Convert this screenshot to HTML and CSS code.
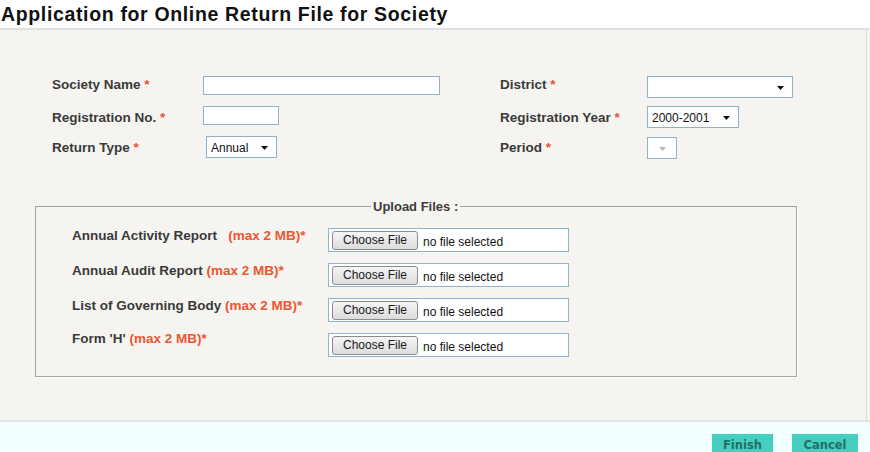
FILE: index.html
```html
<!DOCTYPE html>
<html lang="en">
<head>
<meta charset="utf-8">
<title>Application for Online Return File for Society</title>
<link rel="stylesheet" href="styles.css">
</head>
<body>
<div class="title-bar">
  <h1 class="title">Application for Online Return File for Society</h1>
</div>
<div class="panel">
  <div class="panel-inner">
    <div class="form-grid">
      <label class="lbl lbl-top">Society Name <span class="req">*</span></label>
      <div class="cell"><input class="textbox w-name" type="text"></div>
      <label class="lbl lbl-top">District <span class="req">*</span></label>
      <div class="cell">
        <div class="select w-district">
          <span class="sel-text"></span>
          <svg class="arrow" width="7" height="4" viewBox="0 0 7 4"><path d="M0 0H7L3.5 4Z" fill="#111"/></svg>
        </div>
      </div>

      <label class="lbl">Registration No. <span class="req">*</span></label>
      <div class="cell"><input class="textbox w-reg" type="text"></div>
      <label class="lbl">Registration Year <span class="req">*</span></label>
      <div class="cell">
        <div class="select w-year">
          <span class="sel-text">2000-2001</span>
          <svg class="arrow" width="7" height="4" viewBox="0 0 7 4"><path d="M0 0H7L3.5 4Z" fill="#111"/></svg>
        </div>
      </div>

      <label class="lbl">Return Type <span class="req">*</span></label>
      <div class="cell">
        <div class="select w-type">
          <span class="sel-text">Annual</span>
          <svg class="arrow" width="7" height="4" viewBox="0 0 7 4"><path d="M0 0H7L3.5 4Z" fill="#111"/></svg>
        </div>
      </div>
      <label class="lbl">Period <span class="req">*</span></label>
      <div class="cell">
        <div class="select w-period disabled">
          <svg class="arrow" width="7" height="4" viewBox="0 0 7 4"><path d="M0 0H7L3.5 4Z" fill="#b4b4b4"/></svg>
        </div>
      </div>
    </div>

    <fieldset class="upload">
      <legend class="upload-legend">Upload Files :</legend>
      <div class="up-row">
        <span class="up-label">Annual Activity Report &nbsp; <span class="max">(max 2 MB)*</span></span>
        <div class="filebox"><span class="choose">Choose File</span><span class="nofile">no file selected</span></div>
      </div>
      <div class="up-row">
        <span class="up-label">Annual Audit Report <span class="max">(max 2 MB)*</span></span>
        <div class="filebox"><span class="choose">Choose File</span><span class="nofile">no file selected</span></div>
      </div>
      <div class="up-row">
        <span class="up-label">List of Governing Body <span class="max">(max 2 MB)*</span></span>
        <div class="filebox"><span class="choose">Choose File</span><span class="nofile">no file selected</span></div>
      </div>
      <div class="up-row">
        <span class="up-label up-label-high">Form 'H' <span class="max">(max 2 MB)*</span></span>
        <div class="filebox"><span class="choose">Choose File</span><span class="nofile">no file selected</span></div>
      </div>
    </fieldset>
  </div>
</div>
<div class="footer">
  <button class="btn btn-finish" type="button">Finish</button>
  <button class="btn btn-cancel" type="button">Cancel</button>
</div>
</body>
</html>
```

FILE: styles.css
```css
html, body {
  margin: 0;
  padding: 0;
}
body {
  width: 870px;
  height: 452px;
  overflow: hidden;
  background: #ffffff;
  font-family: "Liberation Sans", Arial, sans-serif;
  color: #3c3c3c;
}

.title-bar {
  height: 28px;
  box-sizing: border-box;
  padding: 2.5px 0 0 1px;
}
.title {
  margin: 0;
  font-size: 19.5px;
  line-height: 22px;
  letter-spacing: 0.65px;
  font-weight: bold;
  color: #111111;
  white-space: nowrap;
}

.panel {
  border-top: 2px solid #e2e1dd;
  background: #f5f4f0;
}
.panel-inner {
  width: 866px;
  height: 390px;
  border-right: 1px solid #dddcd8;
  box-sizing: content-box;
}

.form-grid {
  display: grid;
  grid-template-columns: 151px 297px 147px 1fr;
  grid-template-rows: 30px 30px 23px;
  padding: 46px 0 0 52px;
  align-items: start;
}

.lbl {
  font-size: 13.5px;
  line-height: 15px;
  font-weight: bold;
  color: #3a3a3a;
  padding-top: 4px;
  white-space: nowrap;
}
.lbl-top {
  padding-top: 1px;
}
.req {
  color: #e6553a;
}

.cell {
  display: flex;
}

.textbox {
  box-sizing: border-box;
  height: 19px;
  margin: 0;
  padding: 0 3px;
  border: 1px solid #8fb2c4;
  background: #ffffff;
  outline: none;
}
.w-name { width: 237px; }
.w-reg { width: 76px; }

.select {
  box-sizing: border-box;
  height: 22px;
  border: 1px solid #8fb2c4;
  background: #ffffff;
  display: flex;
  align-items: center;
  justify-content: space-between;
  padding: 1px 8px 0 4px;
  font-size: 12px;
  color: #111111;
}
.sel-text {
  white-space: nowrap;
}
.arrow {
  flex: none;
}
.w-district { width: 146px; }
.w-year { width: 92px; }
.w-type { width: 71px; margin-left: 3px; }
.w-period {
  width: 30px;
  margin-top: 1px;
  justify-content: center;
  padding: 1px 0 0;
}

.upload {
  box-sizing: border-box;
  width: 762px;
  margin: 39.5px 0 0 35px;
  padding: 14.5px 0 8px 36px;
  border: 1px solid #a3a3a3;
  box-shadow: 1px 1px 0 #ffffff;
  min-width: 0;
}
.upload-legend {
  margin-left: 299px;
  padding: 0 2px;
  font-size: 13px;
  line-height: 15px;
  font-weight: bold;
  color: #3c3c3c;
}

.up-row {
  display: flex;
  align-items: flex-start;
  height: 35px;
}
.up-label {
  width: 256px;
  flex: none;
  font-size: 13.5px;
  line-height: 15px;
  font-weight: bold;
  color: #3a3a3a;
  white-space: nowrap;
}
.up-label-high {
  margin-top: -2px;
}
.max {
  color: #ee5630;
}

.filebox {
  box-sizing: border-box;
  width: 241px;
  height: 24px;
  border: 1px solid #8fb6c8;
  background: #ffffff;
  display: flex;
  align-items: center;
  padding: 0 0 0 3px;
}
.choose {
  box-sizing: border-box;
  width: 86px;
  height: 19px;
  border: 1px solid #8c8c8c;
  border-radius: 3px;
  background: linear-gradient(#f6f6f6, #dcdcdc);
  font-size: 12px;
  line-height: 17px;
  text-align: center;
  color: #1a1a1a;
}
.nofile {
  margin-left: 5px;
  padding-top: 3px;
  font-size: 12px;
  color: #111111;
  white-space: nowrap;
}

.footer {
  border-top: 2px solid #e4e4e2;
  background: #f0ffff;
  display: flex;
  justify-content: flex-end;
  align-items: flex-start;
  gap: 19px;
  padding: 12px 12px 0 0;
  box-sizing: border-box;
  height: 32px;
}
.btn {
  height: 22px;
  border: none;
  margin: 0;
  padding: 0;
  background: #45cfc0;
  color: #226e69;
  font-family: "DejaVu Sans", Verdana, sans-serif;
  font-size: 11.5px;
  font-weight: bold;
  line-height: 20px;
}
.btn-finish { width: 61px; }
.btn-cancel { width: 66px; }
```
